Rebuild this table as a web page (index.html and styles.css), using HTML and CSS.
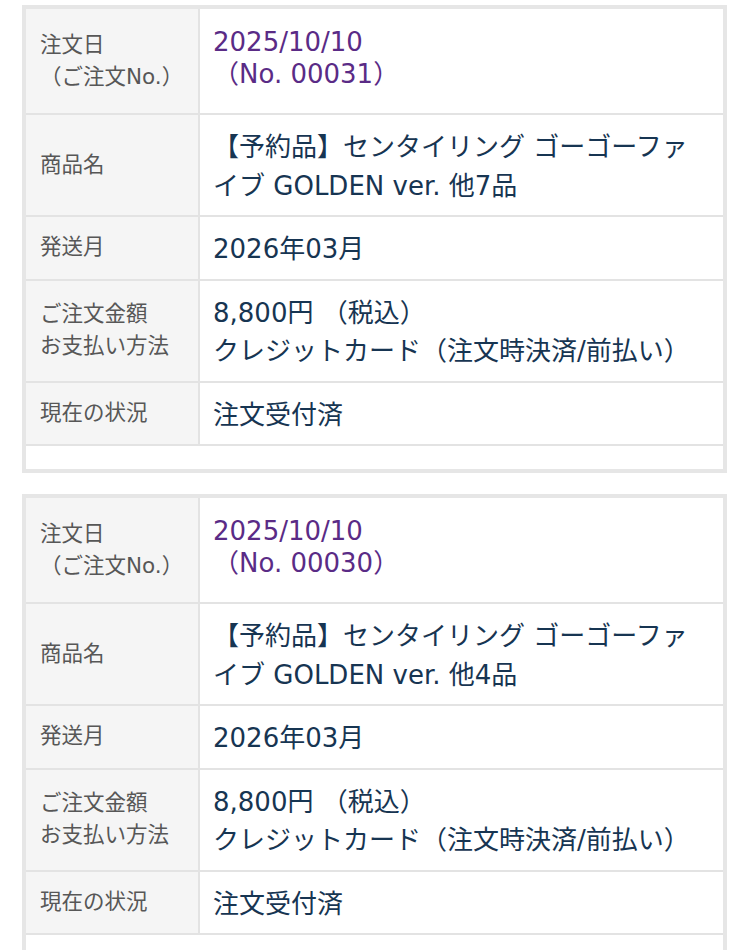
FILE: index.html
```html
<!DOCTYPE html>
<html lang="ja">
<head>
<meta charset="utf-8">
<title>注文履歴</title>
<link rel="stylesheet" href="styles.css">
</head>
<body>
<div class="orders">
  <div class="order">
    <div class="label">注文日<br>（ご注文No.）</div>
    <div class="value first"><a class="link" href="#"><span class="line">2025/10/10</span><span class="line">（No. 00031）</span></a></div>
    <div class="label">商品名</div>
    <div class="value">【予約品】センタイリング ゴーゴーファイブ GOLDEN ver. 他7品</div>
    <div class="label">発送月</div>
    <div class="value">2026年03月</div>
    <div class="label">ご注文金額<br>お支払い方法</div>
    <div class="value">8,800円 （税込）<br>クレジットカード（注文時決済/前払い）</div>
    <div class="label">現在の状況</div>
    <div class="value">注文受付済</div>
    <div class="empty"></div>
  </div>
  <div class="order">
    <div class="label">注文日<br>（ご注文No.）</div>
    <div class="value first"><a class="link" href="#"><span class="line">2025/10/10</span><span class="line">（No. 00030）</span></a></div>
    <div class="label">商品名</div>
    <div class="value">【予約品】センタイリング ゴーゴーファイブ GOLDEN ver. 他4品</div>
    <div class="label">発送月</div>
    <div class="value">2026年03月</div>
    <div class="label">ご注文金額<br>お支払い方法</div>
    <div class="value">8,800円 （税込）<br>クレジットカード（注文時決済/前払い）</div>
    <div class="label">現在の状況</div>
    <div class="value">注文受付済</div>
    <div class="empty"></div>
  </div>
</div>
</body>
</html>
```

FILE: styles.css
```css
html, body {
  margin: 0;
  padding: 0;
  background: #ffffff;
}

body {
  font-family: "DejaVu Sans", "Noto Sans CJK JP", sans-serif;
}

.orders {
  display: flex;
  flex-direction: column;
  gap: 21px;
  padding: 5px 0 0 22px;
}

.order {
  width: 697px;
  border: 4px solid #e6e6e6;
  background: #e3e3e3;
  display: grid;
  grid-template-columns: 172px 523px;
  column-gap: 2px;
  row-gap: 2px;
}

.label {
  background: #f5f5f5;
  color: #575757;
  font-size: 21.5px;
  line-height: 32px;
  padding: 11px 10px 12px 14px;
  display: flex;
  flex-direction: column;
  justify-content: center;
}

.value {
  background: #ffffff;
  color: #173552;
  font-size: 26px;
  line-height: 38.5px;
  padding: 13px 14px 10px 13px;
  display: flex;
  flex-direction: column;
  justify-content: center;
}

.value.first {
  padding-top: 17px;
  padding-bottom: 23px;
  justify-content: flex-start;
}

.link {
  color: #5a2b86;
  text-decoration: none;
}

.line {
  display: block;
  line-height: 32px;
}

.empty {
  grid-column: 1 / span 2;
  height: 23px;
  background: #ffffff;
}
```
